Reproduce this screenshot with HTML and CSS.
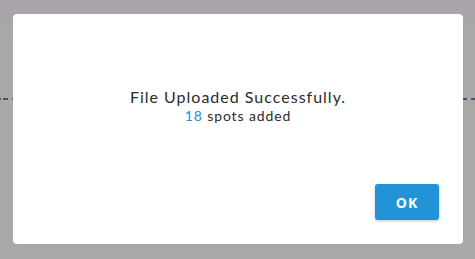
FILE: index.html
```html
<!DOCTYPE html>
<html>
<head>
<meta charset="utf-8">
<link rel="stylesheet" href="styles.css">
</head>
<body>
<div class="page">
  <div class="divider"></div>
</div>
<div class="overlay">
  <div class="dialog">
    <div class="dialog-body">
      <p class="title">File Uploaded Successfully.</p>
      <p class="subtitle"><span class="count">18</span> spots added</p>
    </div>
    <div class="dialog-actions">
      <button class="btn-ok">OK</button>
    </div>
  </div>
</div>
</body>
</html>
```

FILE: styles.css
```css
html, body {
  margin: 0;
  padding: 0;
  width: 475px;
  height: 259px;
  overflow: hidden;
}
body {
  background: #ffffff;
  font-family: "Lato", "Open Sans", sans-serif;
  position: relative;
}
.page {
  padding-top: 98px;
}
.divider {
  height: 2px;
  background: repeating-linear-gradient(90deg, #1f5f8f 0 5px, transparent 5px 9px);
  background-position: 3px 0;
}
.overlay {
  position: absolute;
  inset: 0;
  background: linear-gradient(180deg, rgba(84,72,88,0.5) 0px, rgba(82,82,82,0.5) 40px);
  display: flex;
  align-items: flex-start;
  padding: 14px 12px 0 13px;
  box-sizing: border-box;
}
.dialog {
  width: 450px;
  height: 230px;
  background: #ffffff;
  border-radius: 4px;
  display: flex;
  flex-direction: column;
  box-sizing: border-box;
}
.dialog-body {
  flex: 1;
  padding-top: 73px;
  text-align: center;
}
.title {
  margin: 0;
  font-size: 16px;
  line-height: 20px;
  letter-spacing: 1px;
  color: #2b2b2b;
}
.subtitle {
  margin: 0;
  font-size: 14px;
  line-height: 17px;
  letter-spacing: 0.9px;
  color: #2b2b2b;
}
.count {
  color: #2391d8;
}
.dialog-actions {
  display: flex;
  justify-content: flex-end;
  padding: 0 24px 24px 0;
}
.btn-ok {
  width: 64px;
  height: 36px;
  border: none;
  border-radius: 3px;
  background: #2393d7;
  color: #ffffff;
  font-family: "Open Sans", sans-serif;
  font-weight: 700;
  font-size: 14px;
  letter-spacing: 1px;
  box-shadow: 0 1px 3px rgba(0,0,0,0.25);
  padding: 0;
}
```
